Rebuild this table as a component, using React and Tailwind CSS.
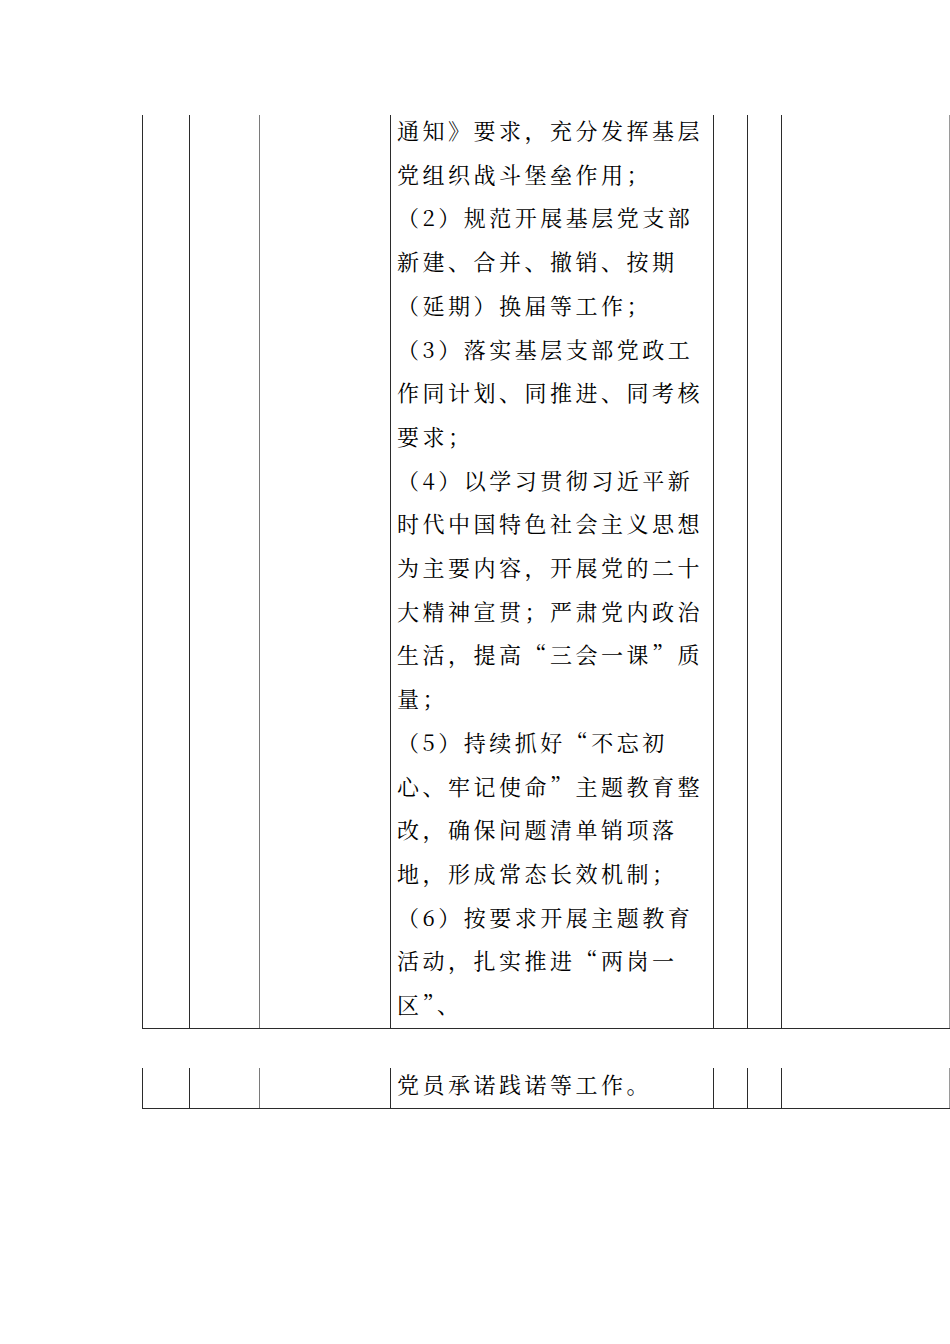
import React from "react";

const lines = [
  "通知》要求，充分发挥基层",
  "党组织战斗堡垒作用；",
  "（2）规范开展基层党支部",
  "新建、合并、撤销、按期",
  "（延期）换届等工作；",
  "（3）落实基层支部党政工",
  "作同计划、同推进、同考核",
  "要求；",
  "（4）以学习贯彻习近平新",
  "时代中国特色社会主义思想",
  "为主要内容，开展党的二十",
  "大精神宣贯；严肃党内政治",
  "生活，提高“三会一课”质",
  "量；",
  "（5）持续抓好“不忘初",
  "心、牢记使命”主题教育整",
  "改，确保问题清单销项落",
  "地，形成常态长效机制；",
  "（6）按要求开展主题教育",
  "活动，扎实推进“两岗一",
  "区”、",
];

function Row({ heightClass, children }) {
  return (
    <div className={`ml-[142px] w-[808px] flex ${heightClass} border-b border-[#2b2b2b]`}>
      <div className="w-[47px] shrink-0 border-l border-[#2b2b2b]" />
      <div className="w-[70px] shrink-0 border-l border-[#2b2b2b]" />
      <div className="w-[131px] shrink-0 border-l border-[#7a7a7a]" />
      <div className="w-[323px] shrink-0 border-l border-[#2b2b2b] pl-[6px]">{children}</div>
      <div className="w-[34px] shrink-0 border-l border-[#2b2b2b]" />
      <div className="w-[34px] shrink-0 border-l border-[#2b2b2b]" />
      <div className="w-[169px] shrink-0 border-l border-r border-l-[#2b2b2b] border-r-[#9a9a9a]" />
    </div>
  );
}

export default function App() {
  return (
    <div
      lang="zh-CN"
      className="w-[950px] h-[1344px] bg-white pt-[115px] text-black overflow-hidden"
      style={{ fontFamily: '"Noto Serif CJK SC", "Noto Sans CJK SC", serif' }}
    >
      <Row heightClass="h-[914px]">
        <div className="-mt-[7px] text-[22px] leading-[43.7px] tracking-[3.5px] whitespace-nowrap">
          {lines.map((l, i) => (
            <div key={i}>{l}</div>
          ))}
        </div>
      </Row>
      <div className="h-[39px]" />
      <Row heightClass="h-[41px]">
        <div className="-mt-[6px] text-[22px] leading-[43.7px] tracking-[3.5px] whitespace-nowrap">
          党员承诺践诺等工作。
        </div>
      </Row>
    </div>
  );
}
